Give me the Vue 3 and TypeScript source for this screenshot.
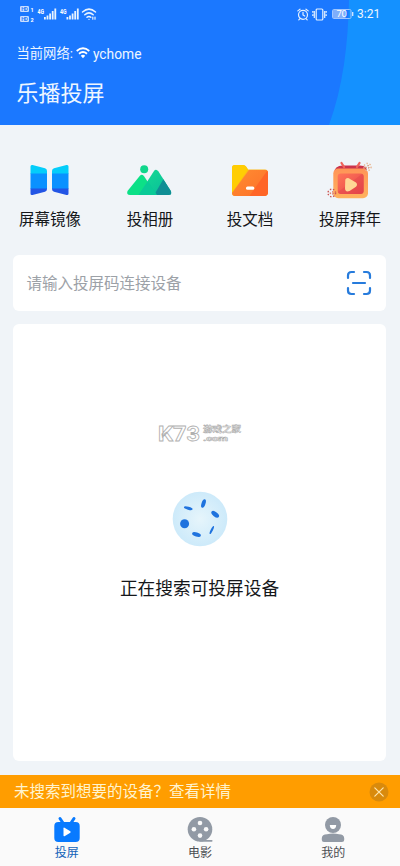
<script setup lang="ts">
import { ref } from 'vue'

interface Shortcut {
  id: string
  label: string
}

const shortcuts: Shortcut[] = [
  { id: 'mirror', label: '屏幕镜像' },
  { id: 'album', label: '投相册' },
  { id: 'doc', label: '投文档' },
  { id: 'newyear', label: '投屏拜年' },
]

const tabs: Shortcut[] = [
  { id: 'cast', label: '投屏' },
  { id: 'movie', label: '电影' },
  { id: 'mine', label: '我的' },
]

const activeTab = ref('cast')
const network = ref('ychome')
</script>

<template>
  <div class="screen">
    <header class="header">
      <svg class="header-arc" viewBox="0 0 400 125" aria-hidden="true">
        <path d="M349 0C348 45 343 87 329 125H400V0Z" fill="#1491ff" />
      </svg>
      <div class="status">
        <svg class="status-left" viewBox="0 0 78 18" aria-hidden="true">
          <g fill="#c8deff">
            <rect x="0" y="1" width="9" height="6" rx="1.2" />
            <rect x="0" y="11" width="9" height="6" rx="1.2" />
          </g>
          <g class="tiny">
            <text x="1.2" y="6" font-size="5.5" fill="#2f7dfa" textLength="6.6">HD</text>
            <text x="1.2" y="16" font-size="5.5" fill="#2f7dfa" textLength="6.6">HD</text>
            <text x="10.5" y="7" font-size="5.5" fill="#fff">1</text>
            <text x="10.5" y="17" font-size="5.5" fill="#fff">2</text>
            <text x="17.5" y="8.5" font-size="6.5" fill="#fff" textLength="6.5" lengthAdjust="spacingAndGlyphs">4G</text>
            <text x="40" y="8.5" font-size="6.5" fill="#fff" textLength="6.5" lengthAdjust="spacingAndGlyphs">4G</text>
          </g>
          <g fill="#e9f3ff">
            <path d="M24 12h1.8v2.5h-1.8zM26.6 10.5h1.8v4h-1.8zM29.2 8.5h1.8v6h-1.8zM31.8 6h1.8v8.500h-1.8zM34.4 3.500h1.8v11h-1.8z" />
            <path d="M46.5 12h1.8v2.5h-1.8zM49.1 10.5h1.8v4h-1.8zM51.7 8.5h1.8v6h-1.8zM54.3 6h1.8v8.500h-1.8zM56.9 3.500h1.8v11h-1.8z" />
          </g>
          <g fill="none" stroke="#e9f3ff" stroke-width="1.5" stroke-linecap="round">
            <path d="M62.5 7Q69 1.2 75.5 7M64.8 9.8Q69 6 73.2 9.8M67 12.3Q69 10.6 70.8 12.3" />
            <path d="M69 14.3v.2M72.8 12v2.2M75 12v2.2" stroke-width="1.2" />
          </g>
        </svg>
        <div class="status-right">
          <svg class="alarm" viewBox="0 0 12 13" fill="none" stroke="#e4f0ff" stroke-width="1.2" stroke-linecap="round" aria-hidden="true">
            <circle cx="6" cy="6.8" r="4.5" />
            <path d="M6 4.3v2.7l1.7 1M.8 2.9 3 1.2M11.2 2.9 9 1.2M2.8 10.8l-1 1M9.2 10.8l1 1" />
          </svg>
          <svg class="vibrate" viewBox="0 0 15 13" fill="none" stroke="#e4f0ff" stroke-width="1.2" aria-hidden="true">
            <rect x="4.2" y="1" width="6.6" height="11" rx="1" />
            <path d="M2.3 3v7M12.7 3v7M.8 3v1.700M.8 6.300V8M14.2 3v1.700M14.2 6.300V8" />
          </svg>
          <svg class="battery" viewBox="0 0 22 10" aria-hidden="true">
            <rect x=".5" y=".5" width="18.5" height="9" rx="1.2" fill="none" stroke="#9fc5ff" />
            <rect x="1" y="1" width="12.5" height="8" fill="#7faefb" />
            <path d="M20.7 3v4" stroke="#d8e8ff" stroke-width="1.3" />
            <text x="4.4" y="8.4" font-size="9.5" fill="#fff" textLength="10.500">70</text>
          </svg>
          <span class="clock">3:21</span>
        </div>
      </div>
      <div class="network">
        <span>当前网络:</span>
        <svg class="wifi" viewBox="0 0 14 12" fill="none" stroke="#fff" stroke-width="1.8" aria-hidden="true">
          <path d="M.7 4Q7-1.4 13.3 4M3 6.8Q7 3.3 11 6.8" />
          <path d="M4.8 8.8Q7 6.9 9.2 8.8L7 11.3Z" fill="#fff" stroke="none" />
        </svg>
        <span class="ssid">{{ network }}</span>
      </div>
      <h1 class="title">乐播投屏</h1>
    </header>

    <nav class="shortcuts">
      <button v-for="item in shortcuts" :key="item.id" class="shortcut">
        <svg v-if="item.id === 'mirror'" class="shortcut-icon" viewBox="2 0 48 42" aria-hidden="true">
          <defs>
            <clipPath id="panels">
              <path d="M6.5 5.5Q6.5 3.6 8.5 4L21 7.3Q23 8 23 10V28Q23 30 21 30.7L8.5 34Q6.500 34.500 6.500 32.500ZM44.500 5.500Q44.500 3.600 42.500 4L30 7.300Q28 8 28 10V28Q28 30 30 30.700L42.500 34Q44.500 34.500 44.500 32.500Z" />
            </clipPath>
          </defs>
          <g clip-path="url(#panels)">
            <path d="M6 3h39v10H6z" fill="#04cdfa" />
            <path d="M6 12.500h39V28H6z" fill="#0a91ff" />
            <path d="M6 27.500h39V35H6z" fill="#2355e5" />
          </g>
        </svg>
        <svg v-else-if="item.id === 'album'" class="shortcut-icon" viewBox="0.500 0 48 42" aria-hidden="true">
          <defs>
            <linearGradient id="peak" x2="1" y2="1">
              <stop stop-color="#16df91" />
              <stop offset="1" stop-color="#08b99c" />
            </linearGradient>
            <clipPath id="right-peak">
              <path d="M13 34 28.500 10Q30.500 7.200 33 10.400L45.300 30Q47 34 43 34Z" />
            </clipPath>
          </defs>
          <circle cx="18.700" cy="8.200" r="4" fill="#10d68c" />
          <path d="M2 30 14.400 14.800Q16.200 12.600 18.400 15L31 34H4.500Q.7 34 2 30Z" fill="#0ce087" />
          <g clip-path="url(#right-peak)">
            <path d="M12 6h36v29H12z" fill="url(#peak)" />
            <path d="M28 35 38 18 48 32V35Z" fill="#108e95" />
          </g>
          <path d="M22.500 20.200 31.500 34H13Z" fill="#09ca97" />
        </svg>
        <svg v-else-if="item.id === 'doc'" class="shortcut-icon" viewBox="0 0 48 42" aria-hidden="true">
          <defs>
            <linearGradient id="folder" x2="1" y2="1">
              <stop stop-color="#ff8d32" />
              <stop offset="1" stop-color="#fd7029" />
            </linearGradient>
          </defs>
          <path d="M6 7Q6 4 9 4H17Q19 4 20 5.500L22 8.500H39Q42 8.500 42 12V31Q42 35 38 35H9Q6 35 6 32Z" fill="#fcb71b" />
          <path d="M6 7Q6 4 9 4H17Q19 4 20 5.500L22 8.500 6 32Z" fill="#ffcd03" />
          <path d="M23 9H38.500Q42 9 42 12.500V31Q42 35 38 35H9Q6.300 35 6 32Z" fill="url(#folder)" />
          <path d="M39 9Q42 9 42 12V31Q42 35 38 35H23.500L41 10Z" fill="#ff6527" />
          <rect x="20" y="25.500" width="8.300" height="3.300" rx="1.500" fill="#fff" />
        </svg>
        <svg v-else class="shortcut-icon" viewBox="0 0 48 42" aria-hidden="true">
          <defs>
            <linearGradient id="tv" x2="0" y2="1">
              <stop stop-color="#ff9457" />
              <stop offset="1" stop-color="#ffb25e" />
            </linearGradient>
            <linearGradient id="panel" x2="1" y2="1">
              <stop stop-color="#ff7658" />
              <stop offset="1" stop-color="#e6444a" />
            </linearGradient>
          </defs>
          <path d="M8.500 12Q8 4.500 17 4.500H34Q41.500 4.500 41 11Z" fill="#cb334b" />
          <path d="M15.500 2 18 6M33.500 2 31 6" stroke="#ef625a" stroke-width="2.300" stroke-linecap="round" />
          <rect x="7.300" y="7.500" width="34.700" height="29.800" rx="5" fill="url(#tv)" />
          <rect x="11.700" y="12.500" width="26" height="20.500" rx="3" fill="url(#panel)" />
          <path d="M12 31 36 13Q38 14 37.700 16V30Q37 33 35 33H15Q12.500 33 12 31Z" fill="#de404b" opacity=".4" />
          <path d="M19.300 18.500Q21.500 15.800 24 18L30 21.500Q32 23.500 30 25.800L23.500 30Q19 31.500 19 27Z" fill="#ffd795" />
          <g fill="none" stroke-width="1.400" stroke-dasharray="1.400 1.700">
            <circle cx="41.500" cy="6" r="3.600" stroke="#e8b693" />
            <circle cx="41.500" cy="6" r="1.500" stroke="#d79a78" />
            <circle cx="5.800" cy="32" r="3.800" stroke="#cb5551" />
            <circle cx="5.800" cy="32" r="1.400" stroke="#df765e" />
          </g>
        </svg>
        <span class="shortcut-label">{{ item.label }}</span>
      </button>
    </nav>

    <main class="content">
      <section class="code-entry">
        <span class="placeholder">请输入投屏码连接设备</span>
        <svg class="scan" viewBox="0 0 26 26" fill="none" stroke="#267bdc" stroke-width="2.200" stroke-linecap="round" aria-hidden="true">
          <path d="M2 8V5.500Q2 2 5.500 2H8M18 2h2.500Q24 2 24 5.500V8M24 18v2.500Q24 24 20.500 24H18M8 24H5.500Q2 24 2 20.500V18M7 13H19" />
        </svg>
      </section>

      <section class="devices">
        <svg class="brand" viewBox="0 0 86 26" aria-hidden="true">
          <g fill="#fff" stroke="#b0b0b0" font-weight="700">
            <text x="1" y="20.500" font-size="21" textLength="42" stroke-width=".8" lengthAdjust="spacingAndGlyphs">K73</text>
            <text x="46" y="11.500" font-size="8.500" textLength="38" stroke-width=".6" lengthAdjust="spacingAndGlyphs">游戏之家</text>
            <text x="46" y="21" font-size="7.800" textLength="25" stroke-width=".6" lengthAdjust="spacingAndGlyphs">.com</text>
          </g>
        </svg>
        <svg class="radar" viewBox="0 0 56 56" aria-hidden="true">
          <defs>
            <radialGradient id="glow">
              <stop stop-color="#e6f5fb" />
              <stop offset="1" stop-color="#cdeafa" />
            </radialGradient>
          </defs>
          <circle cx="28" cy="28" r="27.300" fill="url(#glow)" />
          <g fill="#1f73de">
            <circle cx="12.600" cy="32.700" r="4.500" />
            <ellipse cx="16.300" cy="17.200" rx="4.500" ry="1.500" transform="rotate(15 16.300 17.200)" />
            <ellipse cx="31.500" cy="12.500" rx="4.500" ry="2" transform="rotate(-72 31.500 12.500)" />
            <ellipse cx="43.200" cy="23.300" rx="4.500" ry="2.300" transform="rotate(37 43.200 23.300)" />
            <ellipse cx="39.800" cy="39" rx="4.500" ry="1.100" transform="rotate(-64 39.800 39)" />
            <ellipse cx="24.500" cy="43.500" rx="4.500" ry="2.100" transform="rotate(15 24.500 43.500)" />
          </g>
        </svg>
        <p class="searching">正在搜索可投屏设备</p>
      </section>
    </main>

    <aside class="notice">
      <span class="notice-text">未搜索到想要的设备？查看详情</span>
      <svg class="close" viewBox="0 0 20 20" aria-hidden="true">
        <circle cx="10" cy="10" r="9.500" fill="#d98a0c" />
        <path d="M5.800 5.800l8.400 8.400M14.200 5.800l-8.400 8.400" stroke="#ffe6af" stroke-width="1.200" stroke-linecap="round" />
      </svg>
    </aside>

    <nav class="tabs">
      <button v-for="tab in tabs" :key="tab.id" class="tab" :class="{ active: tab.id === activeTab }" @click="activeTab = tab.id">
        <svg v-if="tab.id === 'cast'" class="tab-icon" viewBox="0 0 28 28" aria-hidden="true">
          <path d="M7 2.500 10 7M21 2.500 18 7" stroke="#087aff" stroke-width="3" stroke-linecap="round" />
          <rect x="1.300" y="6" width="25.400" height="20" rx="4" fill="#087aff" />
          <path d="M10.500 12.200Q10.500 11.300 11.500 11.800L17.300 15.300Q18 16 17.300 16.700L11.500 20.200Q10.500 20.500 10.500 19.500Z" fill="#fff" />
        </svg>
        <svg v-else-if="tab.id === 'movie'" class="tab-icon" viewBox="0 0 28 28" aria-hidden="true">
          <circle cx="14" cy="13.300" r="12.300" fill="#929aa5" />
          <path d="M14 24.800H25.700" stroke="#929aa5" stroke-width="1.700" stroke-linecap="round" />
          <g fill="#fafafa">
            <circle cx="14" cy="7" r="2.300" />
            <circle cx="7.900" cy="13.300" r="2.300" />
            <circle cx="20.100" cy="13.300" r="2.300" />
            <circle cx="14" cy="19.600" r="2.300" />
          </g>
        </svg>
        <svg v-else class="tab-icon" viewBox="0 0 28 28" aria-hidden="true">
          <circle cx="14" cy="9" r="8" fill="#929aa5" />
          <path d="M10.800 9H17.200Q17 13 14 13Q11 13 10.800 9Z" fill="#fff" />
          <path d="M2.800 22Q3 18.500 8 18.200Q14 16.800 20 18.200Q25 18.500 25.200 22V24Q25.200 26 23 26H5Q2.800 26 2.800 24Z" fill="#929aa5" />
        </svg>
        <span class="tab-label">{{ tab.label }}</span>
      </button>
    </nav>
  </div>
</template>

<style>
body {
  margin: 0;
}
</style>

<style scoped>
.screen {
  display: flex;
  flex-direction: column;
  width: 400px;
  height: 866px;
  overflow: hidden;
  background: #f0f4f8;
  color: #15171a;
  font-family: Roboto, "Noto Sans CJK SC", sans-serif;
}

svg {
  display: block;
  flex: none;
}

button {
  padding: 0;
  border: 0;
  background: none;
  color: inherit;
  font: inherit;
}

.header {
  position: relative;
  flex: none;
  box-sizing: border-box;
  height: 125px;
  background: #1b78ff;
  color: #eef6ff;
}

.header-arc {
  position: absolute;
  inset: 0;
  width: 400px;
  height: 125px;
}

.status,
.network,
.title {
  position: relative;
}

.status {
  display: flex;
  justify-content: space-between;
  align-items: center;
  height: 28px;
  padding: 0 21px 0 20px;
}

.status-left {
  width: 78px;
  height: 18px;
}

.tiny {
  font-weight: 700;
}

.status-right {
  display: flex;
  align-items: center;
}

.alarm {
  width: 12px;
  height: 13px;
}

.vibrate {
  width: 15px;
  height: 13px;
  margin-left: 3px;
}

.battery {
  width: 22px;
  height: 10px;
  margin-left: 5px;
}

.clock {
  width: 22px;
  margin-left: 3px;
  font-size: 12px;
  line-height: 16px;
  white-space: nowrap;
}

.network {
  display: flex;
  align-items: center;
  height: 20px;
  margin-top: 16px;
  padding-left: 16.500px;
  font-size: 13.300px;
  line-height: 20px;
}

.wifi {
  width: 14px;
  height: 12px;
  margin: 0 3px 3px 3px;
}

.ssid {
  font-size: 13.800px;
}

.title {
  margin: 13px 0 0 16.500px;
  font-size: 22px;
  font-weight: 400;
  line-height: 34px;
}

.shortcuts {
  display: grid;
  flex: none;
  grid-template-columns: repeat(4, 1fr);
  height: 130px;
}

.shortcut {
  display: flex;
  flex-direction: column;
  align-items: center;
  padding-top: 36px;
}

.shortcut-icon {
  width: 48px;
  height: 42px;
}

.shortcut-label {
  margin-top: 6px;
  font-size: 15.500px;
  line-height: 22px;
}

.content {
  display: flex;
  flex: 1;
  flex-direction: column;
  gap: 13px;
  padding: 0 14px 14px 13px;
}

.code-entry {
  display: flex;
  align-items: center;
  justify-content: space-between;
  flex: none;
  height: 56px;
  box-sizing: border-box;
  padding: 0 14.500px 0 13.500px;
  border-radius: 6px;
  background: #fff;
}

.placeholder {
  padding-top: 2px;
  color: #9ca1a7;
  font-size: 15.500px;
  line-height: 24px;
}

.scan {
  width: 26px;
  height: 26px;
}

.devices {
  display: flex;
  flex: 1;
  flex-direction: column;
  align-items: center;
  border-radius: 6px;
  background: #fff;
}

.brand {
  width: 86px;
  height: 26px;
  margin-top: 96px;
}

.radar {
  width: 56px;
  height: 56px;
  margin-top: 45px;
}

.searching {
  margin: 28px 0 0;
  font-size: 17.700px;
  line-height: 28px;
}

.notice {
  display: flex;
  align-items: center;
  justify-content: space-between;
  flex: none;
  box-sizing: border-box;
  height: 33px;
  padding: 0 11px 0 14px;
  background: #ff9d00;
  color: #fff4cf;
  font-size: 15.500px;
  line-height: 24px;
}

.notice-text {
  padding-top: 1px;
}

.close {
  width: 20px;
  height: 20px;
}

.tabs {
  display: grid;
  flex: none;
  grid-template-columns: repeat(3, 1fr);
  height: 58px;
  background: #fafafa;
}

.tab {
  display: flex;
  flex-direction: column;
  align-items: center;
  padding-top: 8px;
  color: #4b4e52;
}

.tab.active {
  color: #1263b8;
}

.tab-icon {
  width: 28px;
  height: 28px;
}

.tab-label {
  margin-top: 1px;
  font-size: 12px;
  line-height: 17px;
}
</style>
